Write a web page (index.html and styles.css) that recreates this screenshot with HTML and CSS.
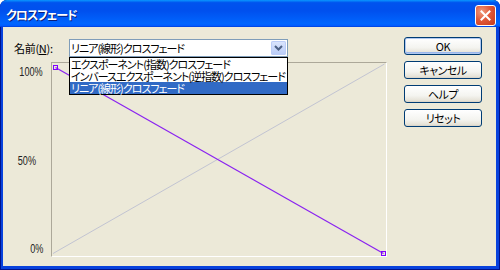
FILE: index.html
```html
<!DOCTYPE html>
<html lang="ja">
<head>
    <meta charset="UTF-8">
    <title>クロスフェード</title>
    <link rel="stylesheet" href="styles.css">
</head>
<body>
    <div class="window">
        <div class="titlebar">
            <span class="title">クロスフェード</span>
            <div class="close">
                <svg width="11" height="11" viewBox="0 0 11 11">
                    <path d="M1.5 1.5 L9.5 9.5 M9.5 1.5 L1.5 9.5" stroke="#fff" stroke-width="2" stroke-linecap="square"/>
                </svg>
            </div>
        </div>
        <div class="client">
            <div class="main">
                <div class="name-row">
                    <label class="name-label">名前(<u>N</u>):</label>
                    <div class="combo">
                        <div class="combo-box">
                            <span class="combo-text">リニア(線形)クロスフェード</span>
                            <span class="combo-arrow">
                                <svg width="9" height="6" viewBox="0 0 9 6">
                                    <path d="M1 1 L4.5 4.5 L8 1" fill="none" stroke="#4D6185" stroke-width="2"/>
                                </svg>
                            </span>
                        </div>
                        <ul class="combo-list">
                            <li>エクスポーネント(指数)クロスフェード</li>
                            <li>インバースエクスポーネント(逆指数)クロスフェード</li>
                            <li class="selected">リニア(線形)クロスフェード</li>
                        </ul>
                    </div>
                </div>
                <div class="chart">
                    <div class="axis">
                        <span>100%</span>
                        <span class="mid">50%</span>
                        <span>0%</span>
                    </div>
                    <div class="plot">
                        <svg width="334" height="193" viewBox="0 0 334 193">
                            <!-- reference diagonal -->
                            <line x1="1" y1="190.5" x2="332.5" y2="1" stroke="#C2C4D2" stroke-width="1"/>
                            <!-- fade curve -->
                            <line x1="3.5" y1="4.5" x2="331.5" y2="190.5" stroke="#8A22F0" stroke-width="1.2"/>
                            <rect x="1.5" y="2.5" width="4" height="4" fill="none" stroke="#8000FF"/>
                            <rect x="329.5" y="188.5" width="4" height="4" fill="none" stroke="#8000FF"/>
                        </svg>
                    </div>
                </div>
            </div>
            <div class="buttons">
                <button class="btn default">OK</button>
                <button class="btn">キャンセル</button>
                <button class="btn">ヘルプ</button>
                <button class="btn">リセット</button>
            </div>
        </div>
    </div>
</body>
</html>
```

FILE: styles.css
```css
body {
    margin: 0;
    width: 500px;
    height: 270px;
    overflow: hidden;
    background: #ffffff;
    font-family: "Noto Sans CJK JP", sans-serif;
}
.window {
    width: 500px;
    height: 270px;
    display: flex;
    flex-direction: column;
    background: #0842DD;
    border-radius: 7px 7px 0 0;
    box-shadow: inset 0 0 0 1px #00138C;
}
.titlebar {
    height: 27px;
    display: flex;
    align-items: flex-start;
    justify-content: space-between;
    padding: 0 4px 0 6px;
    border-radius: 7px 7px 0 0;
    background: linear-gradient(#0997FF 0%, #0053EE 10%, #0050EE 40%, #0066FF 88%, #005BFF 95%, #003DD7 100%);
}
.title {
    margin-top: 9px;
    color: #ffffff;
    font-size: 12px;
    line-height: 12px;
    font-weight: bold;
    letter-spacing: -1px;
    font-feature-settings: "palt";
    text-shadow: 1px 1px #0A1E7A;
}
.close {
    width: 19px;
    height: 19px;
    margin-top: 5px;
    display: flex;
    align-items: center;
    justify-content: center;
    border: 1px solid #ffffff;
    border-radius: 3px;
    background: radial-gradient(circle at 30% 30%, #F09C7E 0%, #E1593A 45%, #C5391A 100%);
}
.client {
    flex: 1;
    display: flex;
    margin: 0 4px 4px 3px;
    padding: 10px 14px 0 11px;
    background: #ECE9D8;
}
.main {
    display: flex;
    flex-direction: column;
}
.name-row {
    display: flex;
    align-items: center;
    height: 18px;
    margin-top: 2px;
}
.name-label {
    width: 55px;
    font-size: 11px;
    color: #000000;
    letter-spacing: -0.3px;
    font-feature-settings: "palt";
}
.combo {
    position: relative;
    width: 219px;
}
.combo-box {
    height: 18px;
    box-sizing: border-box;
    display: flex;
    align-items: center;
    border: 1px solid #7F9DB9;
    background: #ffffff;
}
.combo-text {
    flex: 1;
    padding-left: 1px;
    font-size: 11px;
    line-height: 12px;
    letter-spacing: -1px;
    font-feature-settings: "palt";
}
.combo-arrow {
    width: 15px;
    height: 14px;
    margin-right: 1px;
    display: flex;
    align-items: center;
    justify-content: center;
    border-radius: 2px;
    background: linear-gradient(#DCE6FD, #B8CBF8);
    box-shadow: inset 0 0 0 1px #BCCDF8;
}
.combo-list {
    position: absolute;
    top: 18px;
    left: 0;
    right: 0;
    margin: 0;
    padding: 0;
    list-style: none;
    border: 1px solid #000000;
    background: #ffffff;
}
.combo-list li {
    height: 12px;
    padding-left: 1px;
    font-size: 11px;
    line-height: 12px;
    white-space: nowrap;
    letter-spacing: -1px;
    font-feature-settings: "palt";
}
.combo-list li.selected {
    background: #316AC5;
    color: #ffffff;
}
.chart {
    display: flex;
    height: 195px;
    margin-top: 5px;
}
.axis {
    width: 37px;
    box-sizing: border-box;
    display: flex;
    flex-direction: column;
    justify-content: space-between;
    align-items: flex-end;
    padding: 4px 8px 2px 0;
    font-family: "Liberation Sans", sans-serif;
    font-size: 12px;
    line-height: 12px;
    color: #222222;
}
.axis span {
    transform: scaleX(0.76);
    transform-origin: right center;
}
.axis .mid {
    margin-right: 7px;
}
.plot {
    width: 336px;
    height: 195px;
    box-sizing: border-box;
    border-top: 1px solid #ACA899;
    border-left: 1px solid #ACA899;
    border-right: 1px solid #ffffff;
    border-bottom: 1px solid #ffffff;
}
.plot svg {
    display: block;
    overflow: visible;
}
.buttons {
    margin-left: auto;
    display: flex;
    flex-direction: column;
    gap: 6px;
}
.btn {
    width: 78px;
    height: 18px;
    padding: 0;
    border: 1px solid #003C74;
    border-radius: 3px;
    background: linear-gradient(#FFFFFF 0%, #F4F4F0 60%, #E6E3D8 90%, #D6D0C5 100%);
    font-family: "Noto Sans CJK JP", sans-serif;
    font-size: 11px;
    line-height: 14px;
    color: #000000;
    letter-spacing: -0.5px;
    font-feature-settings: "palt";
}
.btn.default {
    box-shadow: inset 0 0 0 1px #B0C8F0, inset 0 -1px 0 1px #99B6EC;
}
```
